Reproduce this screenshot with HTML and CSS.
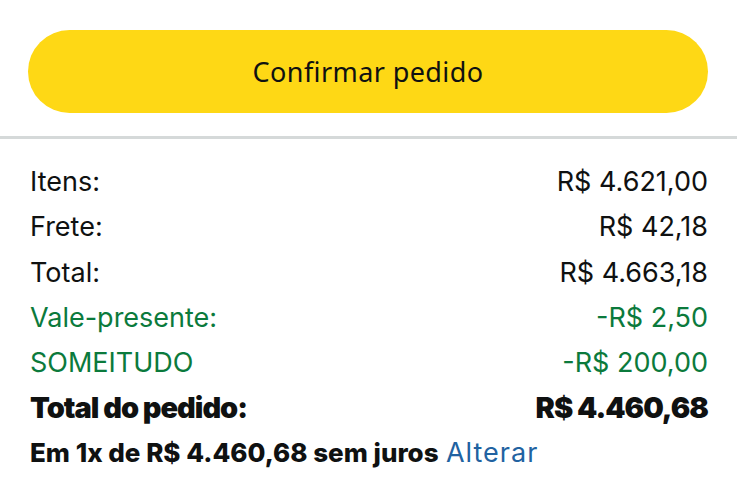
FILE: index.html
```html
<!DOCTYPE html>
<html lang="pt-BR">
<head>
<meta charset="utf-8">
<title>Resumo do pedido</title>
<link rel="stylesheet" href="styles.css">
</head>
<body>
  <div class="action">
    <button class="confirm" type="button">Confirmar pedido</button>
  </div>
  <hr class="divider">
  <div class="summary">
    <div class="row"><span>Itens:</span><span>R$ 4.621,00</span></div>
    <div class="row"><span>Frete:</span><span>R$ 42,18</span></div>
    <div class="row"><span>Total:</span><span>R$ 4.663,18</span></div>
    <div class="row discount"><span>Vale-presente:</span><span>-R$ 2,50</span></div>
    <div class="row discount"><span>SOMEITUDO</span><span>-R$ 200,00</span></div>
    <div class="row grand"><span>Total do pedido:</span><span>R$ 4.460,68</span></div>
    <div class="installments"><strong>Em 1x de R$ 4.460,68 sem juros</strong> <a class="change" href="#">Alterar</a></div>
  </div>
</body>
</html>
```

FILE: styles.css
```css
html, body {
  margin: 0;
  padding: 0;
  background: #ffffff;
}

body {
  font-family: Inter, Roboto, "Liberation Sans", sans-serif;
  color: #0f1111;
  width: 737px;
}

.action {
  padding: 30px 29px 0 28px;
}

.confirm {
  display: block;
  width: 100%;
  height: 83px;
  border: none;
  border-radius: 42px;
  background: #fed815;
  color: #0f1111;
  font-family: "Noto Sans", sans-serif;
  font-size: 27px;
  letter-spacing: 0.4px;
  padding: 0;
}

.divider {
  margin: 23px 0 0;
  border: none;
  height: 3px;
  background: #d5d9d9;
}

.summary {
  padding: 20px 29px 0 30px;
}

.row {
  display: flex;
  justify-content: space-between;
  font-size: 27px;
  line-height: 45.3px;
}

.discount {
  color: #0b7a3c;
}

.grand {
  font-size: 29px;
  font-weight: 900;
  letter-spacing: -1px;
}

.installments {
  font-size: 26px;
  line-height: 44px;
}

.installments strong {
  font-weight: 800;
}

.change {
  color: #2162a1;
  text-decoration: none;
  font-size: 27px;
  letter-spacing: 1px;
}
```
